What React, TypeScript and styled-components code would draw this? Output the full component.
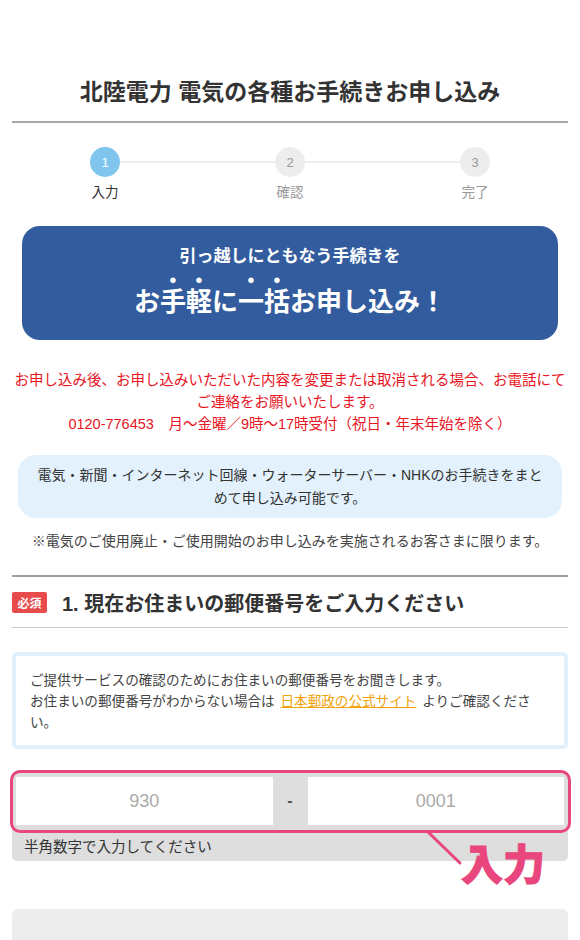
import { Fragment } from "react";
import styled, { createGlobalStyle } from "styled-components";

const GlobalStyle = createGlobalStyle`
  body {
    margin: 0;
    background: #fff;
    color: #333;
    font-family: "Liberation Sans", "Noto Sans CJK JP", sans-serif;
  }
`;

const Page = styled.div`
  padding: 0 12px 40px;
`;

const Title = styled.h1`
  margin: 0;
  padding-top: 77px;
  font-size: 23px;
  line-height: 31px;
  font-weight: 700;
  text-align: center;
  color: #333;
`;

interface RuleProps {
  thick?: boolean;
  tone: string;
}

const Rule = styled.hr<RuleProps>`
  margin: 0;
  border: 0;
  height: ${(p) => (p.thick ? "2px" : "1px")};
  background: ${(p) => p.tone};
`;

const TitleRule = styled(Rule)`
  margin-top: 13px;
`;

const Stepper = styled.ol`
  list-style: none;
  margin: 24px 78px 0;
  padding: 0;
  display: flex;
  align-items: flex-start;
`;

const Step = styled.li`
  width: 30px;
  display: flex;
  flex-direction: column;
  align-items: center;
`;

interface CircleProps {
  active: boolean;
}

const Circle = styled.span<CircleProps>`
  width: 30px;
  height: 30px;
  border-radius: 50%;
  display: flex;
  align-items: center;
  justify-content: center;
  font-size: 13px;
  background: ${(p) => (p.active ? "#7fc5ee" : "#ededed")};
  color: ${(p) => (p.active ? "#fff" : "#999")};
`;

const StepLabel = styled.span<CircleProps>`
  margin-top: 6px;
  font-size: 13.5px;
  line-height: 20px;
  white-space: nowrap;
  color: ${(p) => (p.active ? "#333" : "#999")};
`;

const Connector = styled.span`
  flex: 1;
  height: 2px;
  margin-top: 14px;
  background: #eeeeee;
`;

const Banner = styled.div`
  margin: 23px 10px 0;
  padding: 20px 0 21px;
  border-radius: 18px;
  background: #335c9e;
  color: #fff;
  text-align: center;
  font-weight: 700;
`;

const BannerLead = styled.div`
  font-size: 17px;
  line-height: 22px;
`;

const BannerMain = styled.div`
  margin-top: 4px;
  font-size: 26px;
  line-height: 34px;
`;

const Dotted = styled.span`
  text-emphasis: "●";
  -webkit-text-emphasis: "●";
  text-emphasis-position: over right;
`;

const Notice = styled.p`
  margin: 29px 0 0;
  font-size: 14.5px;
  line-height: 22px;
  text-align: center;
  color: #e8141e;
`;

const ServiceBox = styled.div`
  margin: 20px 6px 0;
  padding: 8.5px 16px;
  border-radius: 18px;
  background: #e2f1fb;
  font-size: 14px;
  line-height: 23px;
  text-align: center;
  color: #333;
`;

const Remark = styled.p`
  margin: 12px 0 0;
  font-size: 14px;
  line-height: 22px;
  text-align: center;
  color: #444;
`;

const SectionRule = styled(Rule)`
  margin-top: 23px;
`;

const SectionHead = styled.div`
  display: flex;
  align-items: center;
  height: 50px;
`;

const Required = styled.span`
  width: 35px;
  height: 21px;
  border-radius: 2px;
  background: #e74b4b;
  color: #fff;
  font-size: 12px;
  font-weight: 700;
  display: flex;
  align-items: center;
  justify-content: center;
`;

const SectionTitle = styled.h2`
  margin: 0 0 0 15px;
  font-size: 20px;
  font-weight: 700;
  color: #333;
`;

const InfoBox = styled.div`
  margin-top: 24px;
  border: 4px solid #e2f0fb;
  border-radius: 5px;
  padding: 13.5px 26px 12.5px 14px;
  font-size: 13.6px;
  line-height: 21px;
  color: #444;
`;

const Link = styled.a`
  margin: 0 2px;
  color: #f0a20a;
  text-decoration: underline;
`;

const InputArea = styled.div`
  position: relative;
  margin-top: 24px;
`;

const InputBlock = styled.div`
  background: #dedede;
  border-radius: 2px 2px 5px 5px;
  padding: 4px;
`;

const InputRow = styled.div`
  display: grid;
  grid-template-columns: 1fr 35px 1fr;
  height: 48px;
`;

const PostalInput = styled.input`
  border: 0;
  outline: 0;
  min-width: 0;
  background: #fff;
  text-align: center;
  font-family: "Liberation Sans", "Noto Sans CJK JP", sans-serif;
  font-size: 18px;
  color: #333;

  &::placeholder {
    color: #aaa;
  }
`;

const Dash = styled.span`
  display: flex;
  align-items: center;
  justify-content: center;
  font-size: 16px;
  font-weight: 700;
  color: #555;
`;

const Hint = styled.div`
  padding: 12px 8px 0;
  font-size: 14.5px;
  line-height: 20px;
  color: #333;
`;

const Highlight = styled.div`
  position: absolute;
  left: -2px;
  right: -3px;
  top: -3px;
  height: 63px;
  box-sizing: border-box;
  border: 3px solid #e8467c;
  border-radius: 10px;
  pointer-events: none;
`;

const Pointer = styled.svg`
  position: absolute;
  left: 414px;
  top: 57px;
  overflow: visible;
`;

const Callout = styled.span`
  position: absolute;
  left: 449px;
  top: 72px;
  font-size: 42px;
  line-height: 1;
  font-weight: 900;
  color: #e8467c;
  -webkit-text-stroke: 1px #e8467c;
`;

const NextButton = styled.button`
  display: block;
  width: 100%;
  margin-top: 48px;
  height: 64px;
  border: 0;
  border-radius: 6px;
  background: #ededed;
  color: #fbfbfb;
  font-family: "Liberation Sans", "Noto Sans CJK JP", sans-serif;
  font-size: 20px;
  font-weight: 700;
  padding-top: 26px;
`;

const steps = ["入力", "確認", "完了"];

export default function App() {
  return (
    <>
      <GlobalStyle />
      <Page>
        <Title>北陸電力 電気の各種お手続きお申し込み</Title>
        <TitleRule thick tone="#a8a8a8" />

        <Stepper>
          {steps.map((label, i) => (
            <Fragment key={label}>
              {i > 0 && <Connector />}
              <Step>
                <Circle active={i === 0}>{i + 1}</Circle>
                <StepLabel active={i === 0}>{label}</StepLabel>
              </Step>
            </Fragment>
          ))}
        </Stepper>

        <Banner>
          <BannerLead>引っ越しにともなう手続きを</BannerLead>
          <BannerMain>
            お<Dotted>手軽</Dotted>に<Dotted>一括</Dotted>お申し込み！
          </BannerMain>
        </Banner>

        <Notice>
          お申し込み後、お申し込みいただいた内容を変更または取消される場合、お電話にてご連絡をお願いいたします。
          <br />
          0120-776453　月〜金曜／9時〜17時受付（祝日・年末年始を除く）
        </Notice>

        <ServiceBox>
          電気・新聞・インターネット回線・ウォーターサーバー・NHKのお手続きをまとめて申し込み可能です。
        </ServiceBox>

        <Remark>※電気のご使用廃止・ご使用開始のお申し込みを実施されるお客さまに限ります。</Remark>

        <SectionRule thick tone="#a0a0a0" />
        <SectionHead>
          <Required>必須</Required>
          <SectionTitle>1. 現在お住まいの郵便番号をご入力ください</SectionTitle>
        </SectionHead>
        <Rule tone="#cccccc" />

        <InfoBox>
          ご提供サービスの確認のためにお住まいの郵便番号をお聞きします。
          <br />
          お住まいの郵便番号がわからない場合は <Link href="#">日本郵政の公式サイト</Link> よりご確認ください。
        </InfoBox>

        <InputArea>
          <InputBlock>
            <InputRow>
              <PostalInput placeholder="930" inputMode="numeric" />
              <Dash>-</Dash>
              <PostalInput placeholder="0001" inputMode="numeric" />
            </InputRow>
            <Hint>半角数字で入力してください</Hint>
          </InputBlock>
          <Highlight />
          <Pointer width="36" height="36" viewBox="0 0 36 36">
            <line x1="2" y1="2" x2="34" y2="33" stroke="#e8467c" strokeWidth="3" strokeLinecap="round" />
          </Pointer>
          <Callout>入力</Callout>
        </InputArea>

        <NextButton type="button">お申し込みへ進む</NextButton>
      </Page>
    </>
  );
}
